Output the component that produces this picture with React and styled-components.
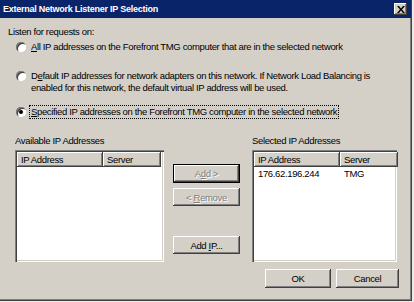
import React from 'react'
import styled, { createGlobalStyle, css } from 'styled-components'

const GlobalStyle = createGlobalStyle`
  body {
    margin: 0;
    background: #ecebe8;
    font-family: "Liberation Sans", Arial, sans-serif;
    font-size: 9.5px;
    letter-spacing: -0.35px;
    color: #000;
  }
`

const Window = styled.div`
  width: 411px;
  height: 300px;
  background: #d4d0c8;
  border-right: 1px solid #404040;
  border-bottom: 1px solid #404040;
  box-shadow: inset -1px -1px 0 #808080;
  display: flex;
  flex-direction: column;
`

const TitleBar = styled.div`
  height: 18px;
  background: #0a246a;
  display: flex;
  align-items: center;
  justify-content: space-between;
  padding: 0 4px 0 3px;
  color: #fff;
  font-weight: 700;
  font-size: 9px;
  letter-spacing: -0.25px;
`

const CloseButton = styled.div`
  width: 13px;
  height: 12px;
  background: #d4d0c8;
  box-shadow: inset -1px -1px 0 #404040, inset 1px 1px 0 #fff, inset -2px -2px 0 #808080;
  display: flex;
  align-items: center;
  justify-content: center;
`

const Content = styled.div`
  flex: 1;
  padding: 8px 12px 0 8px;
  display: flex;
  flex-direction: column;
`

const Line = styled.div`
  line-height: 12px;
  height: 12px;
`

const Options = styled.div`
  padding-left: 8px;
  display: flex;
  flex-direction: column;
`

const Option = styled.div`
  display: flex;
  align-items: flex-start;
  gap: 4px;
  margin-top: ${({ gap }) => gap}px;
`

const Radio = styled.span`
  flex: none;
  width: 10px;
  height: 10px;
  margin-top: 1px;
  border-radius: 50%;
  background: #fff;
  box-shadow: inset 1px 1px 0 #808080, inset 2px 2px 0 #404040, inset -1px -1px 0 #fff;
  display: flex;
  align-items: center;
  justify-content: center;
  &::after {
    content: '';
    width: 4px;
    height: 4px;
    border-radius: 50%;
    background: ${({ checked }) => (checked ? '#000' : 'transparent')};
  }
`

const OptionText = styled.div`
  line-height: 12px;
  padding: 0 1px;
  white-space: nowrap;
  outline: ${({ focused }) => (focused ? '1px dotted #000' : 'none')};
`

const Key = styled.span`
  text-decoration: underline;
`

const ListsRow = styled.div`
  margin-top: 17px;
  padding-left: 7px;
  display: grid;
  grid-template-columns: 149px 67px 148px;
  column-gap: 9px;
  & > :last-child {
    margin-left: 3px;
  }
`

const ListColumn = styled.div`
  display: flex;
  flex-direction: column;
`

const ListLabel = styled.div`
  line-height: 12px;
  height: 12px;
  margin-bottom: 3px;
`

const sunken = css`
  box-shadow: inset 1px 1px 0 #808080, inset 2px 2px 0 #404040, inset -1px -1px 0 #fff, inset -2px -2px 0 #d4d0c8;
`

const raised = css`
  box-shadow: inset -1px -1px 0 #404040, inset 1px 1px 0 #fff, inset -2px -2px 0 #808080;
`

const ListBox = styled.div`
  height: 112px;
  background: #fff;
  padding: 2px;
  box-sizing: border-box;
  ${sunken}
`

const HeaderRow = styled.div`
  display: grid;
  grid-template-columns: 86px 58px;
`

const HeaderCell = styled.div`
  height: 15px;
  line-height: 15px;
  padding-left: 4px;
  background: #d4d0c8;
  ${raised}
`

const Row = styled.div`
  display: grid;
  grid-template-columns: 86px 58px;
  line-height: 14px;
  & > span {
    padding-left: 4px;
  }
`

const ButtonColumn = styled.div`
  padding-top: 29px;
  display: flex;
  flex-direction: column;
  gap: 5px;
`

const Button = styled.div`
  height: ${({ h }) => h || 18}px;
  width: ${({ w }) => w}px;
  background: #d4d0c8;
  display: flex;
  align-items: center;
  justify-content: center;
  box-sizing: border-box;
  white-space: pre;
  margin-top: ${({ mt }) => mt || 0}px;
  ${raised}
  ${({ isDefault }) =>
    isDefault &&
    css`
      box-shadow: inset 0 0 0 1px #000, inset -2px -2px 0 #404040, inset 2px 2px 0 #fff, inset -3px -3px 0 #808080;
    `}
  color: ${({ disabled }) => (disabled ? '#808080' : '#000')};
  text-shadow: ${({ disabled }) => (disabled ? '1px 1px 0 #fff' : 'none')};
`

const Footer = styled.div`
  margin-top: 7px;
  display: flex;
  justify-content: flex-end;
  gap: 5px;
`

const columns = ['IP Address', 'Server']

const List = ({ rows }) => (
  <ListBox>
    <HeaderRow>
      {columns.map(c => (
        <HeaderCell key={c}>{c}</HeaderCell>
      ))}
    </HeaderRow>
    {rows.map(r => (
      <Row key={r.ip}>
        <span>{r.ip}</span>
        <span>{r.server}</span>
      </Row>
    ))}
  </ListBox>
)

export default function App () {
  return (
    <>
      <GlobalStyle />
      <Window>
        <TitleBar>
          <span>External Network Listener IP Selection</span>
          <CloseButton>
            <svg width="8" height="7" viewBox="0 0 8 7">
              <path d="M0 0h2l2 2.5L6 0h2L5 3.5 8 7H6L4 4.5 2 7H0l3-3.5z" fill="#000" />
            </svg>
          </CloseButton>
        </TitleBar>
        <Content>
          <Line>Listen for requests on:</Line>
          <Options>
            <Option gap={3}>
              <Radio />
              <OptionText>
                <Key>A</Key>ll IP addresses on the Forefront TMG computer that are in the selected network
              </OptionText>
            </Option>
            <Option gap={17}>
              <Radio />
              <OptionText>
                D<Key>e</Key>fault IP addresses for network adapters on this network. If Network Load Balancing is
                <br />
                enabled for this network, the default virtual IP address will be used.
              </OptionText>
            </Option>
            <Option gap={12}>
              <Radio checked />
              <OptionText focused>
                <Key>S</Key>pecified IP addresses on the Forefront TMG computer in the selected network
              </OptionText>
            </Option>
          </Options>
          <ListsRow>
            <ListColumn>
              <ListLabel>Available IP Addresses</ListLabel>
              <List rows={[]} />
            </ListColumn>
            <ButtonColumn>
              <Button w={67} h={19} disabled isDefault>
                <span>A<Key>d</Key>d &gt;</span>
              </Button>
              <Button w={67} disabled>
                <span>&lt; <Key>R</Key>emove</span>
              </Button>
              <Button w={67} mt={25}>
                <span>Add <Key>I</Key>P...</span>
              </Button>
            </ButtonColumn>
            <ListColumn>
              <ListLabel>Selected IP Addresses</ListLabel>
              <List rows={[{ ip: '176.62.196.244', server: 'TMG' }]} />
            </ListColumn>
          </ListsRow>
          <Footer>
            <Button w={66} h={19}>OK</Button>
            <Button w={63} h={19}>Cancel</Button>
          </Footer>
        </Content>
      </Window>
    </>
  )
}
